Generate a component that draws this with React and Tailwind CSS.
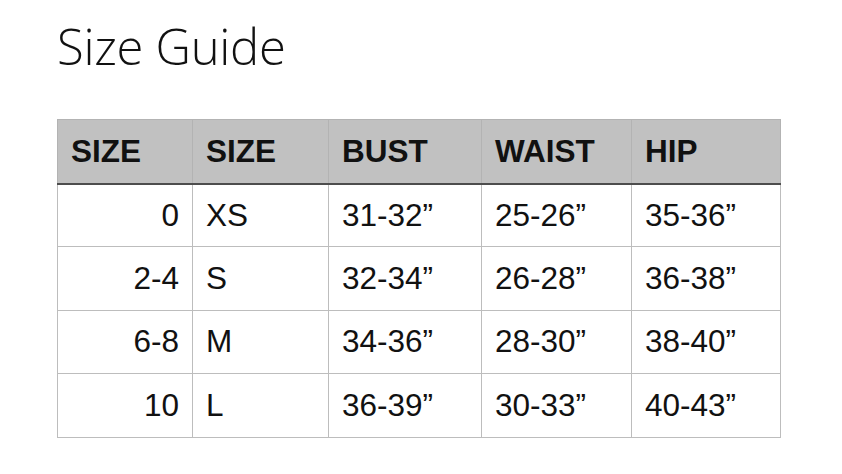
import React from "react";

const COLUMNS = [
  { label: "SIZE", width: "w-[135px]" },
  { label: "SIZE", width: "w-[136px]" },
  { label: "BUST", width: "w-[153px]" },
  { label: "WAIST", width: "w-[150px]" },
  { label: "HIP", width: "w-[149px]" },
];

const ROWS = [
  ["0", "XS", "31-32”", "25-26”", "35-36”"],
  ["2-4", "S", "32-34”", "26-28”", "36-38”"],
  ["6-8", "M", "34-36”", "28-30”", "38-40”"],
  ["10", "L", "36-39”", "30-33”", "40-43”"],
];

const SizeGuide = () => {
  return (
    <div className="pl-[57px] pt-[14px]">
      <h1 className="text-[49px] leading-[64px] font-light text-[#111] font-['Open_Sans',sans-serif] tracking-[-0.3px]">
        Size Guide
      </h1>
      <table className="mt-[41px] border-collapse font-['Liberation_Sans',Arial,sans-serif] text-[31.5px] text-[#111]">
        <thead>
          <tr className="h-[64px] bg-[#c1c1c1]">
            {COLUMNS.map((col, i) => (
              <th
                key={i}
                className={`${col.width} border border-[#b3b3b3] border-b-2 border-b-[#4d4d4d] px-[13px] text-left font-bold`}
              >
                {col.label}
              </th>
            ))}
          </tr>
        </thead>
        <tbody>
          {ROWS.map((row, r) => (
            <tr key={r} className="h-[63.4px]">
              {row.map((cell, c) => (
                <td
                  key={c}
                  className={`border border-[#bdbdbd] px-[13px] ${c === 0 ? "text-right" : "text-left"}`}
                >
                  {cell}
                </td>
              ))}
            </tr>
          ))}
        </tbody>
      </table>
    </div>
  );
};

export default function App() {
  return (
    <div className="w-[842px] h-[474px] bg-white overflow-hidden">
      <SizeGuide />
    </div>
  );
}
